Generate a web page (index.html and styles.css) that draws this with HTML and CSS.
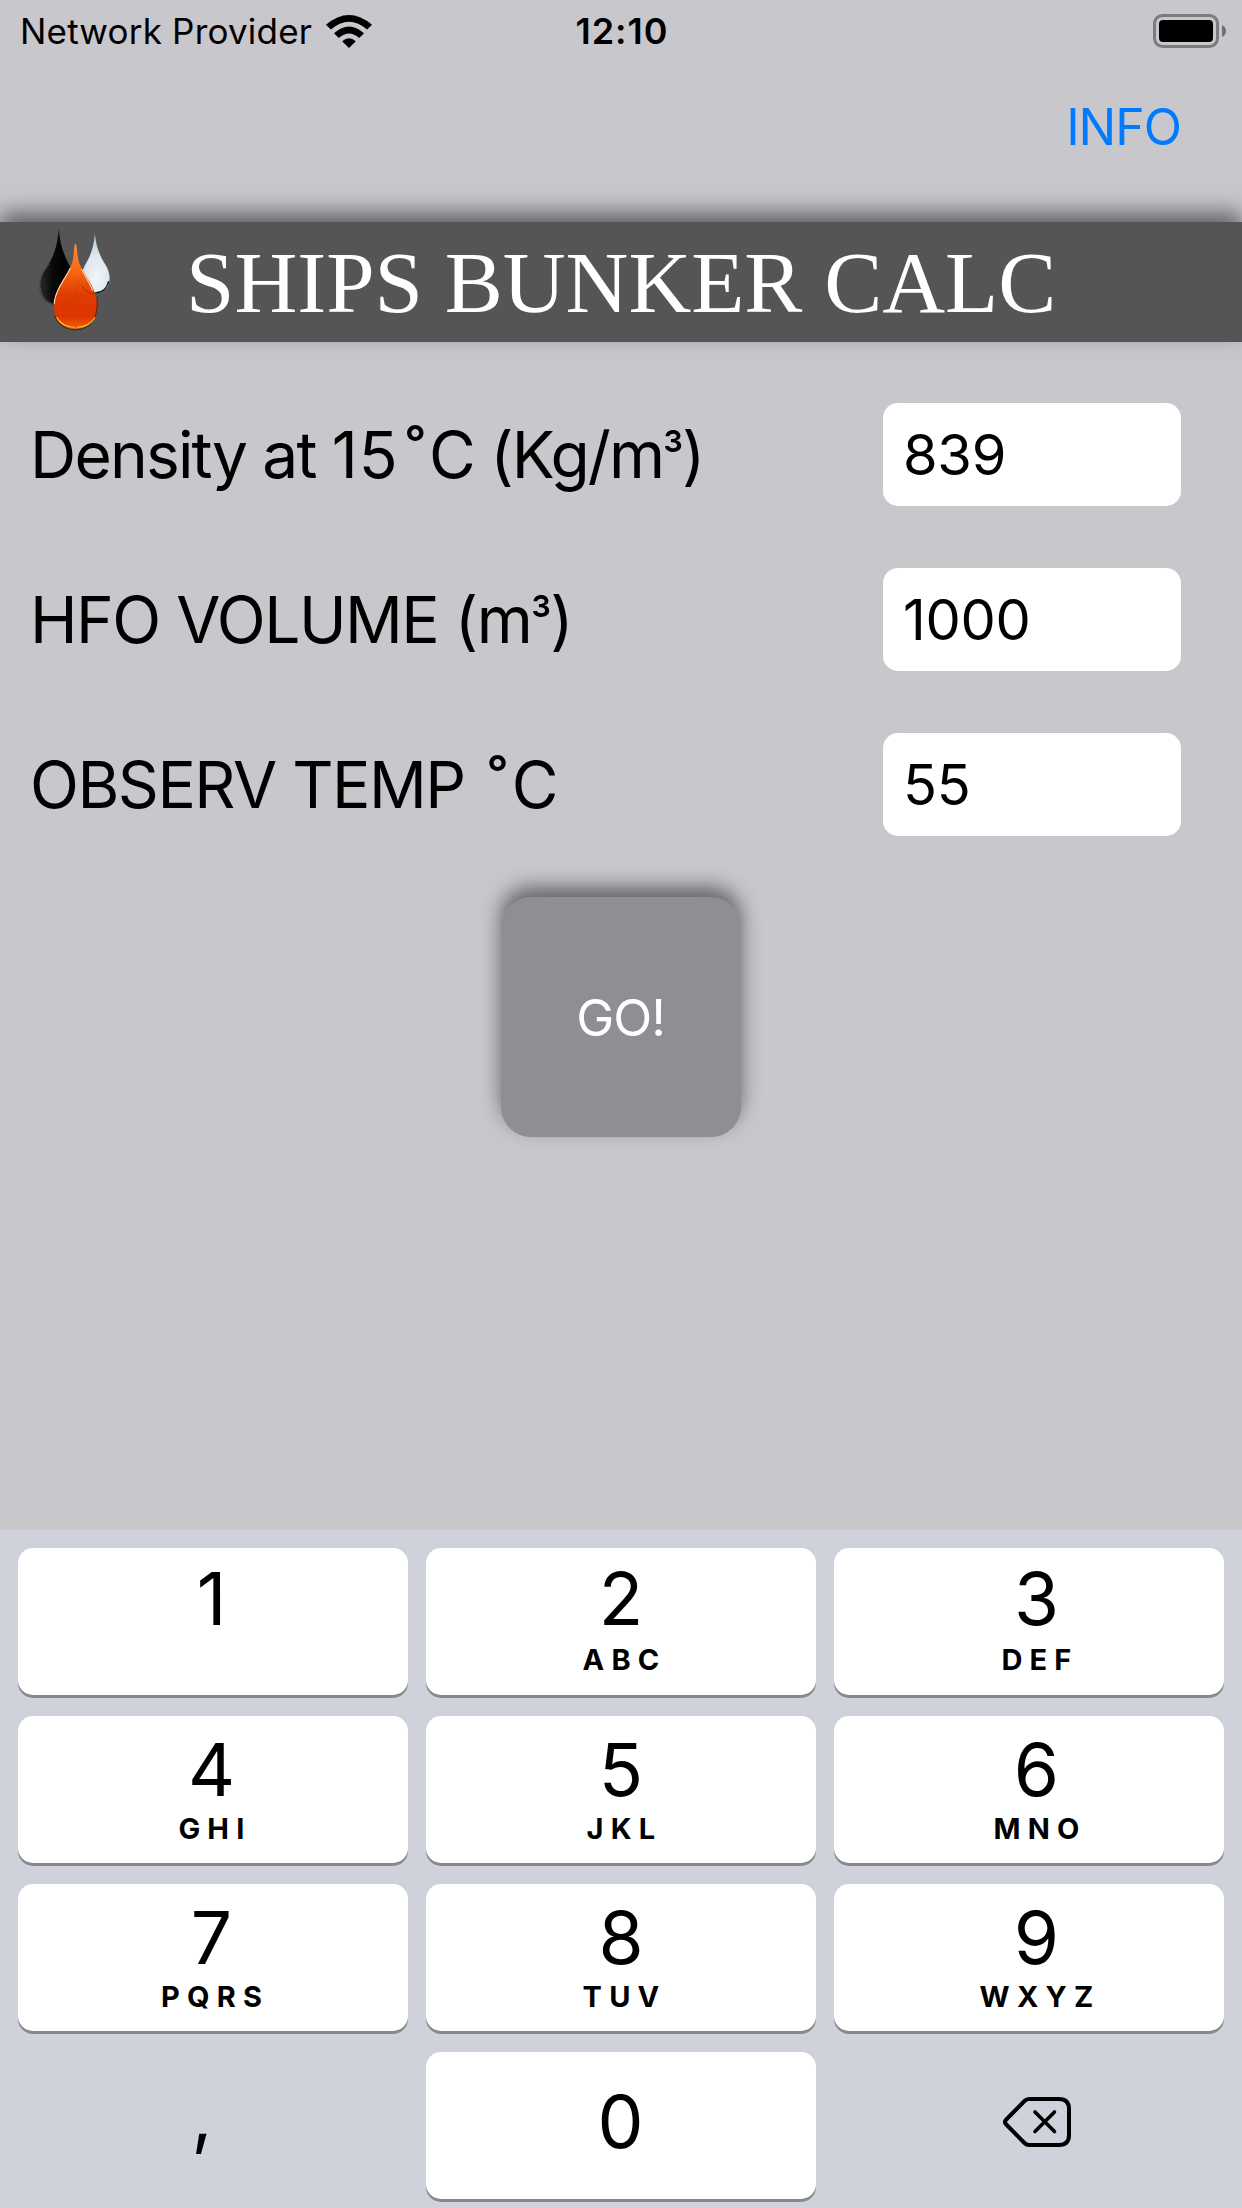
FILE: index.html
```html
<!DOCTYPE html>
<html lang="en">

<head>
    <meta charset="UTF-8">
    <meta name="viewport" content="width=device-width, initial-scale=1.0">
    <title>Ships Bunker Calc</title>
    <link rel="stylesheet" href="styles.css">
</head>

<body>
    <!-- Status bar -->
    <div class="status-bar">
        <div class="carrier">
            <span class="carrier-name">Network Provider</span>
            <svg class="wifi" viewBox="0 0 46 33">
                <path d="M0 9.8 Q23 -9.8 46 9.8 L41.2 14.5 Q23 -1.2 4.8 14.5 Z" />
                <path d="M8 18.2 Q23 4.6 38 18.2 L33.2 23 Q23 14 12.8 23 Z" />
                <path d="M16.2 26.2 Q23 20.2 29.8 26.2 L23 33 Z" />
            </svg>
        </div>
        <span class="time">12:10</span>
        <svg class="battery" viewBox="0 0 74 34">
            <rect x="1.5" y="1.5" width="63" height="31" rx="8" fill="none" stroke="#7c7c7f" stroke-width="3" />
            <rect x="6" y="6" width="54" height="22" rx="4" />
            <path d="M69 11 Q73 13 73 17 Q73 21 69 23 Z" fill="#717174" />
        </svg>
    </div>

    <div class="nav">
        <a class="info">INFO</a>
    </div>

    <!-- Title -->
    <div class="header">
        <svg class="logo" viewBox="110 75 230 320">
            <defs>
                <linearGradient id="dark" x1="0" y1="0" x2="1" y2="0">
                    <stop offset="0" stop-color="#2c2c2c" />
                    <stop offset="0.35" stop-color="#0a0a0a" />
                    <stop offset="0.7" stop-color="#000" />
                    <stop offset="1" stop-color="#1d1d1d" />
                </linearGradient>
                <radialGradient id="light" cx="0.55" cy="0.75" r="0.7">
                    <stop offset="0" stop-color="#f0f5f9" />
                    <stop offset="0.55" stop-color="#dfe8ef" />
                    <stop offset="1" stop-color="#b9cbd8" />
                </radialGradient>
                <linearGradient id="orange" x1="0" y1="0" x2="0" y2="1">
                    <stop offset="0" stop-color="#ff8a35" />
                    <stop offset="0.3" stop-color="#f96a14" />
                    <stop offset="0.6" stop-color="#df3c02" />
                    <stop offset="0.85" stop-color="#dd3500" />
                    <stop offset="1" stop-color="#f0600a" />
                </linearGradient>
            </defs>
            <path fill="url(#dark)" d="M178 85 C181 128 190 158 208 192 C225 225 238 250 234 275 C228 305 200 318 168 315 C135 308 118 285 119 250 C121 225 134 208 150 188 C166 160 175 130 178 85 Z" />
            <path fill="none" stroke="#777" stroke-width="2" d="M150 192 C132 210 122 230 121 252 C120 280 136 302 160 312" />
            <path fill="url(#light)" d="M286 102 C289 135 298 160 312 185 C324 202 331 218 330 237 C328 264 310 279 287 280 C262 279 245 263 244 238 C244 220 252 202 262 185 C276 160 283 135 286 102 Z" />
            <path fill="none" stroke="#10161b" stroke-width="4" d="M327 243 C322 266 306 278 287 278 C271 278 258 270 250 260" />
            <path fill="url(#orange)" d="M228 132 C234 132 231 165 240 190 C252 220 276 245 286 280 C292 292 294 310 293 328 C290 364 262 386 228 386 C194 386 166 364 163 326 C162 296 172 275 186 250 C200 228 212 208 218 188 C225 165 222 132 228 132 Z" />
            <path fill="none" stroke="#ffe3b8" stroke-width="3" d="M213 203 C200 232 166 270 164 312" />
            <path fill="none" stroke="#f9d9b0" stroke-width="3" d="M246 207 C256 228 272 250 279 271" />
            <path fill="none" stroke="#a82500" stroke-opacity="0.35" stroke-width="2" d="M236 232 C240 280 222 306 184 316" />
            <path fill="none" stroke="#8f2600" stroke-width="2" d="M248 258 C258 274 272 281 287 281" />
            <path fill="none" stroke="#1c1412" stroke-width="2" d="M292 290 C298 350 276 388 228 388 C196 388 174 372 166 346" />
            <path fill="none" stroke="#ffc21c" stroke-width="3" stroke-linecap="round" d="M286 352 C272 374 252 381 233 381 M224 381 C202 380 184 372 172 352" />
        </svg>
        <h1>SHIPS BUNKER CALC</h1>
    </div>

    <!-- Form -->
    <form id="bunkerForm">
        <div class="row">
            <label for="density" class="density-label">Density at <span class="num">15</span><span class="deg">˚</span>C (Kg/m<span class="cube">³</span>)</label>
            <input type="text" id="density" name="density" value="839">
        </div>
        <div class="row">
            <label for="volume">HFO VOLUME (m<span class="cube">³</span>)</label>
            <input type="text" id="volume" name="volume" value="1000">
        </div>
        <div class="row">
            <label for="temp">OBSERV TEMP <span class="deg">˚</span>C</label>
            <input type="text" id="temp" name="temp" value="55">
        </div>
        <button type="button" class="go">GO!</button>
    </form>

    <!-- Number pad -->
    <div class="keyboard">
        <div class="key first-row left"><b>1</b></div>
        <div class="key first-row"><b>2</b><span>ABC</span></div>
        <div class="key first-row right"><b>3</b><span>DEF</span></div>
        <div class="key left"><b>4</b><span>GHI</span></div>
        <div class="key"><b>5</b><span>JKL</span></div>
        <div class="key right"><b>6</b><span>MNO</span></div>
        <div class="key left"><b>7</b><span>PQRS</span></div>
        <div class="key"><b>8</b><span>TUV</span></div>
        <div class="key right"><b>9</b><span>WXYZ</span></div>
        <div class="key plain comma"><b>,</b></div>
        <div class="key zero"><b>0</b></div>
        <div class="key plain delete">
            <svg class="backspace" viewBox="0 0 68 50" fill="none" stroke="#000" stroke-width="4" stroke-linecap="round" stroke-linejoin="round">
                <path d="M26 2 H56 Q66 2 66 12 V38 Q66 48 56 48 H26 Q23.500 48 21.500 46 L2.800 27 Q1.200 25 2.800 23 L21.500 4 Q23.500 2 26 2 Z" />
                <path d="M32 15 L51.500 34.500 M51.500 15 L32 34.500" stroke-width="3.600" />
            </svg>
        </div>
    </div>
</body>

</html>
```

FILE: styles.css
```css
* {
    box-sizing: border-box;
}

body {
    font-family: Inter, "Liberation Sans", sans-serif;
    background-color: #c8c7cc;
    color: #000;
    display: flex;
    flex-direction: column;
    width: 1242px;
    height: 2208px;
    margin: 0;
    overflow: hidden;
    white-space: nowrap;
}

/* Status bar */
.status-bar {
    display: grid;
    grid-template-columns: 1fr auto 1fr;
    align-items: center;
    height: 60px;
    padding: 0 15px 0 20px;
    font-size: 35px;
    line-height: 62px;
}

.carrier {
    display: flex;
    align-items: center;
}

.carrier-name {
    width: 306px;
    letter-spacing: 0.2px;
}

.wifi {
    width: 46px;
    height: 33px;
}

.time {
    padding-right: 3px;
    font-size: 36px;
    font-weight: 600;
    letter-spacing: 1px;
}

.battery {
    width: 74px;
    height: 34px;
    justify-self: end;
}

.nav {
    display: flex;
    justify-content: flex-end;
    height: 162px;
    padding: 37px 61px 0 0;
}

.info {
    color: #007aff;
    font-size: 50px;
    line-height: 60px;
    letter-spacing: -1px;
}

/* Title */
.header {
    display: flex;
    align-items: center;
    height: 120px;
    padding-left: 36px;
    background-color: #555;
    box-shadow: 0 -10px 20px rgba(0, 0, 0, 0.5);
}

.logo {
    width: 77px;
    height: 107px;
    margin-bottom: 7px;
}

h1 {
    margin: 2px 0 0 73px;
    color: #fff;
    font-family: "Liberation Serif", serif;
    font-size: 87px;
    font-weight: normal;
    line-height: 100px;
}

/* Form */
form {
    display: flex;
    flex-direction: column;
    height: 1188px;
    padding: 61px 61px 0 30px;
}

.row {
    display: flex;
    align-items: center;
    justify-content: space-between;
    height: 103px;
    margin-bottom: 62px;
}

label {
    font-size: 64px;
    line-height: 100px;
    letter-spacing: -1.5px;
}

.density-label {
    letter-spacing: -1.8px;
}

.num {
    letter-spacing: 1px;
}

.deg {
    margin: 0 6px 0 7px;
}

.cube {
    display: inline-block;
    margin: 0 -2px;
    font-size: 55px;
    line-height: 1;
    vertical-align: 2px;
    transform: scaleX(0.84);
}

input[type="text"] {
    width: 298px;
    height: 103px;
    padding: 0 20px;
    border: none;
    border-radius: 15px;
    background-color: #fff;
    font-family: inherit;
    font-size: 56px;
    letter-spacing: -0.3px;
}

.go {
    width: 240px;
    height: 240px;
    margin: -1px 0 0 471px;
    padding: 0 1px 0 0;
    border: none;
    border-radius: 30px;
    background-color: #8e8e93;
    box-shadow: 0 -10px 20px rgba(0, 0, 0, 0.5);
    color: #fff;
    font-family: inherit;
    font-size: 51px;
    letter-spacing: -1px;
}

/* Number pad */
.keyboard {
    display: grid;
    grid-template-columns: repeat(3, 390px);
    grid-auto-rows: 147px;
    gap: 21px 18px;
    height: 678px;
    padding: 18px;
    background-color: #cfd2da;
}

.key {
    display: flex;
    flex-direction: column;
    align-items: center;
    padding-top: 10px;
    border-radius: 15px;
    background-color: #fff;
    box-shadow: 0 3px 0 #88898d;
}

.key b {
    font-size: 73px;
    font-weight: 400;
    line-height: 88px;
}

.key span {
    margin-top: -3px;
    padding-left: 7px;
    font-size: 29px;
    font-weight: 700;
    line-height: 36px;
    letter-spacing: 7.2px;
}

.first-row {
    padding-top: 7px;
}

.first-row span {
    margin-top: -1px;
}

.left {
    padding-right: 3px;
}

.right {
    padding-left: 15px;
}

.plain {
    background: none;
    box-shadow: none;
}

.zero {
    padding: 26px 1px 0 0;
}

.comma {
    padding: 19px 22px 0 0;
}

.delete {
    padding: 45px 0 0 16px;
}

.backspace {
    width: 68px;
    height: 50px;
}
```
